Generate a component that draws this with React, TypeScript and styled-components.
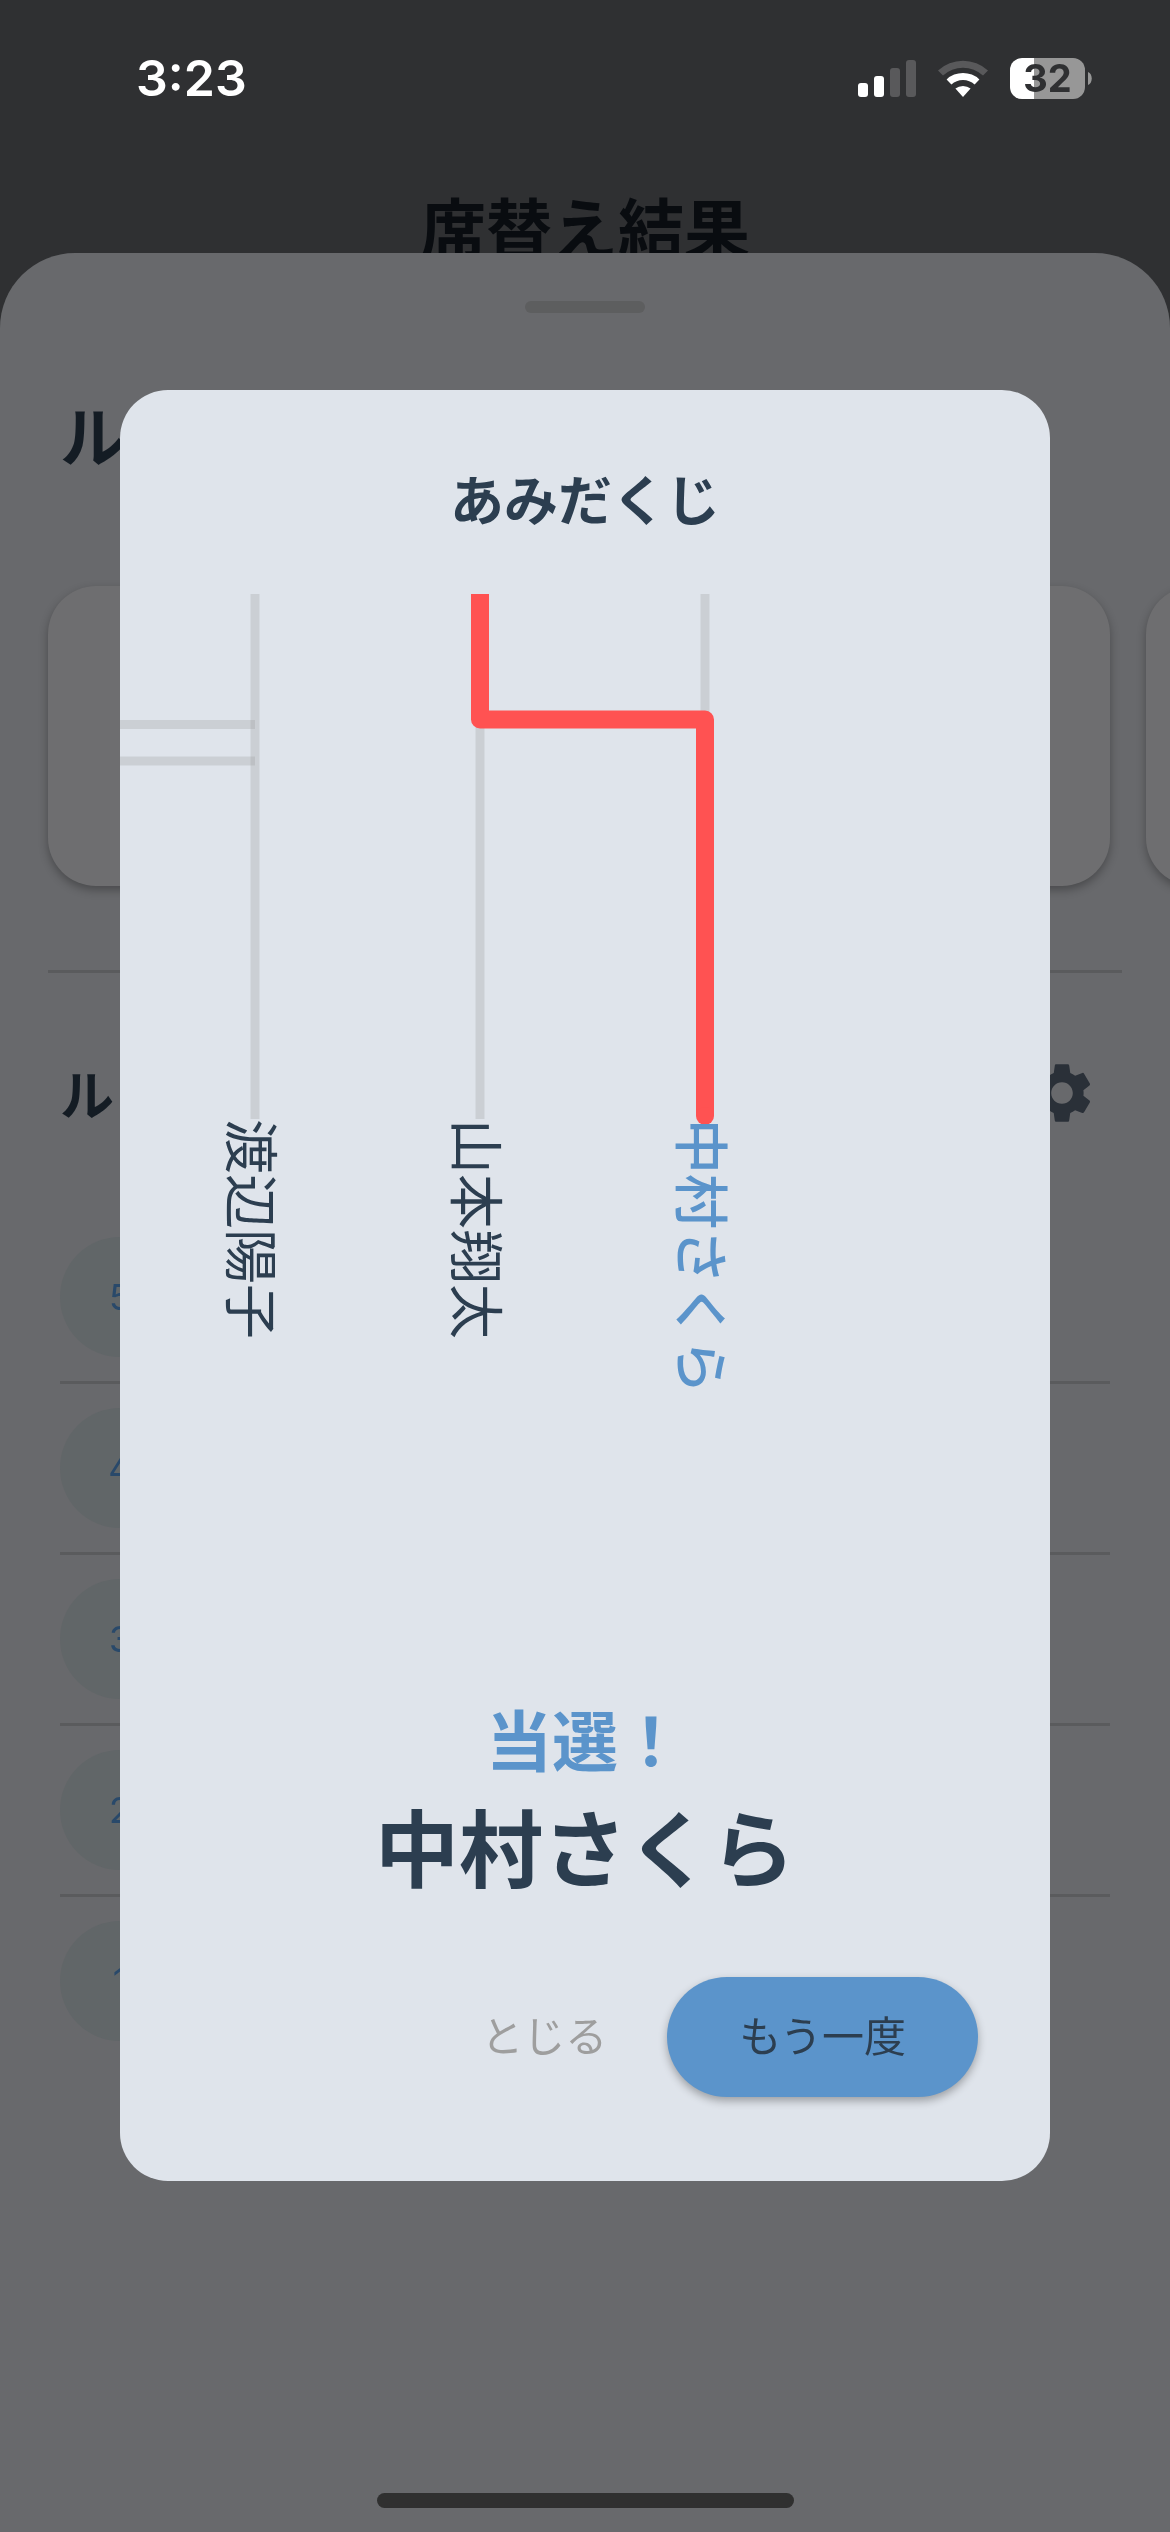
import React from 'react';
import styled, { createGlobalStyle } from 'styled-components';
import { MdSettings } from 'react-icons/md';

const jp = `"Noto Sans CJK JP", sans-serif`;
const latin = `Inter, "Noto Sans CJK JP", sans-serif`;

const color = {
  backdrop: '#2f3032',
  backdropInk: '#090c10',
  sheet: '#68696c',
  sheetInk: '#141c24',
  card: '#6e6e70',
  rule: '#5a5b5d',
  avatar: '#616668',
  avatarInk: '#29496a',
  dialog: '#dfe4eb',
  ink: '#2c3e50',
  accent: '#5b94cb',
  path: '#ff5252',
  muted: '#9e9e9e',
};

const GlobalStyle = createGlobalStyle`
  * { box-sizing: border-box; }
  body { margin: 0; background: ${color.backdrop}; font-family: ${jp}; }
  h1, h2, p, ul { margin: 0; padding: 0; }
  button { border: 0; padding: 0; background: none; font-family: inherit; }
`;

const Screen = styled.div`
  min-height: 100vh;
  overflow: hidden;
`;

const StatusBar = styled.header`
  position: fixed;
  top: 0;
  left: 0;
  right: 0;
  z-index: 3;
  display: flex;
  justify-content: space-between;
  align-items: center;
  height: 141px;
  padding: 15px 78px 0 136px;
`;

const Clock = styled.span`
  font: 600 50px/60px ${latin};
  color: #fff;
`;

const StatusIcons = styled.div`
  display: flex;
  align-items: center;
  gap: 22px;
`;

const Battery = styled.div`
  display: flex;
  align-items: center;
  gap: 3px;
`;

const BatteryBody = styled.span<{ $level: number }>`
  width: 75px;
  height: 41px;
  border-radius: 12px;
  background: linear-gradient(to right, #fff ${(p) => p.$level}%, #979797 ${(p) => p.$level}%);
  color: ${color.backdrop};
  font: 700 38px/41px ${latin};
  text-align: center;
`;

const AppBar = styled.div`
  display: flex;
  align-items: center;
  justify-content: center;
  height: 168px;
  margin-top: 141px;
`;

const AppTitle = styled.h1`
  font-size: 66px;
  line-height: 96px;
  font-weight: 700;
  color: ${color.backdropInk};
`;

const Sheet = styled.section`
  position: fixed;
  left: 0;
  right: 0;
  bottom: 0;
  z-index: 1;
  height: 90vh;
  padding-top: 48px;
  border-radius: 75px 75px 0 0;
  background: ${color.sheet};
  overflow: hidden;
`;

const Handle = styled.div`
  width: 120px;
  height: 12px;
  margin: 0 auto 72px;
  border-radius: 6px;
  background: #5d5e5f;
`;

const SheetTitle = styled.h2<{ $size: number }>`
  font-size: ${(p) => p.$size}px;
  line-height: 96px;
  font-weight: 700;
  color: ${color.sheetInk};
`;

const SheetHead = styled.div<{ $height: number }>`
  display: flex;
  align-items: center;
  justify-content: space-between;
  height: ${(p) => p.$height}px;
  padding: 0 60px;
`;

const Cards = styled.div`
  display: flex;
  gap: 36px;
  margin-top: 105px;
  padding-left: 48px;
`;

const Card = styled.div`
  flex: 0 0 calc(100% - 60px);
  height: 300px;
  border-radius: 48px;
  background: ${color.card};
  box-shadow: 0 4px 10px rgba(0, 0, 0, 0.3);
`;

const Rule = styled.hr`
  height: 3px;
  margin: 84px 48px 48px;
  border: 0;
  background: ${color.rule};
`;

const IconButton = styled.button`
  display: grid;
  place-items: center;
  width: 96px;
  height: 96px;
  color: #2a3038;
  font-size: 72px;
`;

const List = styled.ul`
  margin: 48px 60px 0;
  list-style: none;
`;

const Row = styled.li`
  padding: 24px 0;
  border-bottom: 3px solid ${color.rule};

  &:last-child {
    border-bottom: 0;
  }
`;

const Avatar = styled.span`
  display: grid;
  place-items: center;
  width: 120px;
  height: 120px;
  border-radius: 50%;
  background: ${color.avatar};
  color: ${color.avatarInk};
  font: 400 36px/48px ${latin};
`;

const Overlay = styled.div`
  position: fixed;
  inset: 0;
  z-index: 2;
  display: flex;
  align-items: center;
  padding: 141px 120px 102px;
`;

const Dialog = styled.section`
  flex: 1;
  min-width: 0;
  padding: 72px 0 84px;
  border-radius: 48px;
  background: ${color.dialog};
  overflow: hidden;
`;

const DialogTitle = styled.h2`
  font-size: 54px;
  line-height: 72px;
  font-weight: 700;
  text-align: center;
  color: ${color.ink};
`;

const Ladder = styled.svg`
  display: block;
  width: 100%;
  height: 525px;
  margin-top: 60px;
  overflow: visible;
`;

const Names = styled.div`
  position: relative;
  display: flex;
  gap: 145px;
  height: 510px;
  padding-left: 95px;
`;

const Name = styled.span<{ $winner?: boolean }>`
  writing-mode: vertical-rl;
  text-orientation: sideways;
  white-space: nowrap;
  font-size: 55px;
  line-height: 80px;
  font-weight: ${(p) => (p.$winner ? 500 : 400)};
  color: ${(p) => (p.$winner ? color.accent : color.ink)};
`;

const Result = styled.div`
  margin-top: 60px;
  text-align: center;
  font-weight: 700;
`;

const ResultLabel = styled.p`
  font-size: 66px;
  line-height: 96px;
  color: ${color.accent};
`;

const ResultName = styled.p`
  font-size: 84px;
  line-height: 120px;
  color: ${color.ink};
`;

const Actions = styled.div`
  display: flex;
  justify-content: flex-end;
  gap: 24px;
  margin-top: 72px;
  padding: 0 72px;
`;

const ActionButton = styled.button<{ $primary?: boolean }>`
  height: 120px;
  padding: 0 ${(p) => (p.$primary ? 72 : 36)}px 6px;
  border-radius: 60px;
  font-size: 42px;
  line-height: 60px;
  color: ${(p) => (p.$primary ? color.ink : color.muted)};
  background: ${(p) => (p.$primary ? color.accent : 'transparent')};
  box-shadow: ${(p) => (p.$primary ? '0 4px 8px rgba(0, 0, 0, 0.3)' : 'none')};
`;

const HomeIndicator = styled.div`
  position: fixed;
  left: 0;
  right: 0;
  bottom: 24px;
  z-index: 3;
  width: 417px;
  height: 15px;
  margin: 0 auto;
  border-radius: 8px;
  background: #303030;
`;

const SignalIcon = () => (
  <svg width="58" height="37" viewBox="0 0 58 37" aria-hidden="true">
    <rect x="0" y="23" width="10" height="14" rx="3" fill="#fff" />
    <rect x="16" y="16" width="10" height="21" rx="3" fill="#fff" />
    <rect x="32" y="8" width="10" height="29" rx="3" fill="#59595b" />
    <rect x="48" y="0" width="10" height="37" rx="3" fill="#59595b" />
  </svg>
);

const WifiIcon = () => (
  <svg width="50" height="37" viewBox="0 0 50 37" aria-hidden="true">
    <path d="M0 10.5A37 37 0 0 1 50 10.5L45 15.6A29.5 29.5 0 0 0 5 15.6Z" fill="#59595b" />
    <path d="M8.6 19.4A24 24 0 0 1 41.4 19.4L36.6 24.6A17 17 0 0 0 13.4 24.6Z" fill="#fff" />
    <path d="M17.4 28.6A12 12 0 0 1 32.6 28.6L25 37Z" fill="#fff" />
  </svg>
);

const BatteryTip = () => (
  <svg width="4" height="13" viewBox="0 0 4 13" aria-hidden="true">
    <path d="M0 0C5 2 5 11 0 13Z" fill="#979797" />
  </svg>
);

const members = [
  { name: '渡辺陽子', x: 135 },
  { name: '山本翔太', x: 360 },
  { name: '中村さくら', x: 585, winner: true },
];

export default function App() {
  return (
    <Screen>
      <GlobalStyle />
      <StatusBar>
        <Clock>3:23</Clock>
        <StatusIcons>
          <SignalIcon />
          <WifiIcon />
          <Battery>
            <BatteryBody $level={32}>32</BatteryBody>
            <BatteryTip />
          </Battery>
        </StatusIcons>
      </StatusBar>

      <AppBar>
        <AppTitle>席替え結果</AppTitle>
      </AppBar>

      <Sheet>
        <Handle />
        <SheetHead $height={96}>
          <SheetTitle $size={66}>ル</SheetTitle>
        </SheetHead>
        <Cards>
          <Card />
          <Card />
        </Cards>
        <Rule />
        <SheetHead $height={144}>
          <SheetTitle $size={54}>ル</SheetTitle>
          <IconButton type="button" aria-label="設定">
            <MdSettings />
          </IconButton>
        </SheetHead>
        <List>
          {[5, 4, 3, 2, 1].map((n) => (
            <Row key={n}>
              <Avatar>{n}</Avatar>
            </Row>
          ))}
        </List>
      </Sheet>

      <Overlay>
        <Dialog role="dialog" aria-labelledby="dialog-title">
          <DialogTitle id="dialog-title">あみだくじ</DialogTitle>
          <Ladder aria-hidden="true">
            <g stroke={color.muted} strokeOpacity="0.3" strokeWidth="9">
              {members.map((m) => (
                <line key={m.name} x1={m.x} y1="0" x2={m.x} y2="525" />
              ))}
              <line x1="0" y1="130.5" x2="135" y2="130.5" />
              <line x1="0" y1="167" x2="135" y2="167" />
            </g>
            <path
              d="M360 0V125.5H585V522"
              fill="none"
              stroke={color.path}
              strokeWidth="18"
              strokeLinejoin="round"
            />
            <circle cx="585" cy="522" r="9" fill={color.path} />
          </Ladder>
          <Names>
            {members.map((m) => (
              <Name key={m.name} $winner={m.winner}>
                {m.name}
              </Name>
            ))}
          </Names>
          <Result>
            <ResultLabel>当選！</ResultLabel>
            <ResultName>中村さくら</ResultName>
          </Result>
          <Actions>
            <ActionButton type="button">とじる</ActionButton>
            <ActionButton type="button" $primary>
              もう一度
            </ActionButton>
          </Actions>
        </Dialog>
      </Overlay>
      <HomeIndicator />
    </Screen>
  );
}
